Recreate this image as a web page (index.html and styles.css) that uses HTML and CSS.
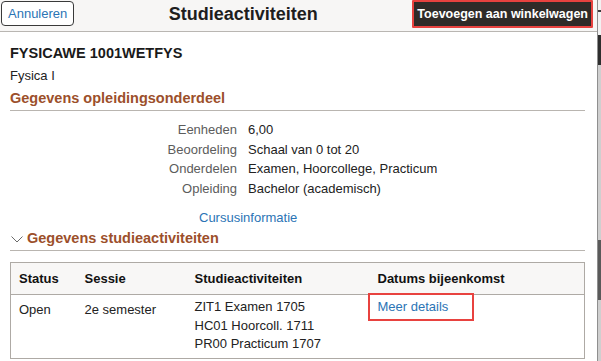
FILE: index.html
```html
<!DOCTYPE html>
<html lang="nl">
<head>
    <meta charset="UTF-8">
    <meta name="viewport" content="width=device-width, initial-scale=1.0">
    <title>Studieactiviteiten</title>
    <link rel="stylesheet" href="styles.css">
</head>
<body>

<div class="window">
    <div class="page">
        <div class="topbar">
            <button class="btn-cancel">Annuleren</button>
            <h1 class="title">Studieactiviteiten</h1>
            <button class="btn-add">Toevoegen aan winkelwagen</button>
        </div>

        <div class="content">
            <div class="course-code">FYSICAWE 1001WETFYS</div>
            <div class="course-name">Fysica I</div>

            <h2 class="section-title">Gegevens opleidingsonderdeel</h2>
            <div class="details">
                <span class="label">Eenheden</span><span class="value">6,00</span>
                <span class="label">Beoordeling</span><span class="value">Schaal van 0 tot 20</span>
                <span class="label">Onderdelen</span><span class="value">Examen, Hoorcollege, Practicum</span>
                <span class="label">Opleiding</span><span class="value">Bachelor (academisch)</span>
            </div>

            <a class="course-link" href="#">Cursusinformatie</a>

            <h2 class="section-title">
                <svg class="chevron" width="12" height="7" viewBox="0 0 12 7">
                    <polyline points="0.5,0.5 6,6 11.5,0.5" fill="none" stroke="#6a6a6a" stroke-width="1"/>
                </svg>
                Gegevens studieactiviteiten
            </h2>

            <table class="activities">
                <colgroup>
                    <col class="col-status">
                    <col class="col-session">
                    <col class="col-activity">
                    <col>
                </colgroup>
                <thead>
                    <tr>
                        <th>Status</th>
                        <th>Sessie</th>
                        <th>Studieactiviteiten</th>
                        <th>Datums bijeenkomst</th>
                    </tr>
                </thead>
                <tbody>
                    <tr>
                        <td class="offset">Open</td>
                        <td class="offset">2e semester</td>
                        <td>ZIT1 Examen 1705<br>HC01 Hoorcoll. 1711<br>PR00 Practicum 1707</td>
                        <td class="dates">
                            <a href="#">Meer details</a>
                            <span class="highlight"></span>
                        </td>
                    </tr>
                </tbody>
            </table>
        </div>
    </div>
    <div class="edge"></div>
</div>

</body>
</html>
```

FILE: styles.css
```css
body {
    margin: 0;
    font-family: "Liberation Sans", Arial, sans-serif;
    font-size: 13px;
    color: #222;
    background: #fff;
}
.window {
    display: flex;
    width: 601px;
    height: 361px;
    overflow: hidden;
}
.page {
    width: 597px;
    flex: none;
}
.edge {
    flex: 1;
    border-left: 1px solid #8f8f8f;
    background: linear-gradient(#f2f2f2 0 10px, #3a3a3a 10px 12px, #f2f2f2 12px 35px, #2e2e2e 35px 65px, #cfcfcf 65px 240px, #5a5a5a 240px 300px, #cfcfcf 300px);
}

/* bovenbalk */
.topbar {
    display: flex;
    align-items: flex-start;
    height: 31px;
    padding: 0 4px 0 1px;
    background: #f7f6f5;
    border-bottom: 1px solid #b9b6b2;
}
.btn-cancel {
    margin-top: 1px;
    height: 25px;
    padding: 0 6px;
    font-family: inherit;
    font-size: 13px;
    color: #2b74b5;
    background: #fff;
    border: 1px solid #3a3a3a;
    border-radius: 4px;
}
.title {
    flex: 1;
    margin: 0;
    font-size: 18px;
    line-height: 28px;
    text-align: center;
    color: #1e1e1e;
}
.btn-add {
    height: 28px;
    padding: 0 3px;
    font-family: inherit;
    font-size: 12.5px;
    font-weight: bold;
    color: #fff;
    background: #2f2b28;
    border: 2px solid #e8423f;
    border-radius: 1px;
}

/* inhoud */
.content {
    padding: 0 12px 0 10px;
}
.course-code {
    margin-top: 13px;
    font-size: 14.5px;
    font-weight: bold;
    line-height: 17px;
    color: #1a1a1a;
}
.course-name {
    margin-top: 5px;
    line-height: 17px;
}
.section-title {
    display: flex;
    align-items: center;
    margin: 6px 0 0;
    padding-bottom: 3px;
    font-size: 14.5px;
    line-height: 17px;
    color: #9c4f2b;
    border-bottom: 1px solid #b9b5b0;
}
.chevron {
    margin: 2px 4px 0 1px;
}
.details {
    display: grid;
    grid-template-columns: 227px auto;
    column-gap: 11px;
    margin-top: 9px;
    line-height: 19.5px;
}
.label {
    text-align: right;
    color: #5c5c5c;
}
.course-link {
    display: block;
    margin: 11px 0 0 189px;
    line-height: 17px;
    color: #2b74b5;
    text-decoration: none;
}
.course-link + .section-title {
    margin-top: 4px;
}

/* tabel */
.activities {
    width: 575px;
    margin-top: 11px;
    border-collapse: collapse;
    table-layout: fixed;
    border: 1px solid #aeaaa5;
}
.col-status {
    width: 66px;
}
.col-session {
    width: 110px;
}
.col-activity {
    width: 183px;
}
.activities th {
    padding: 7px 8px;
    line-height: 17px;
    text-align: left;
    color: #111;
    background: #f8f7f6;
    border-bottom: 1px solid #aeaaa5;
}
.activities td {
    padding: 3px 8px 4px;
    line-height: 18.5px;
    vertical-align: top;
}
.activities td.offset {
    padding-top: 6px;
}
.dates {
    position: relative;
}
.dates a {
    color: #2b74b5;
    text-decoration: none;
}
.highlight {
    position: absolute;
    left: -2px;
    top: -2px;
    width: 102px;
    height: 24px;
    border: 2px solid #e8423f;
}
```
